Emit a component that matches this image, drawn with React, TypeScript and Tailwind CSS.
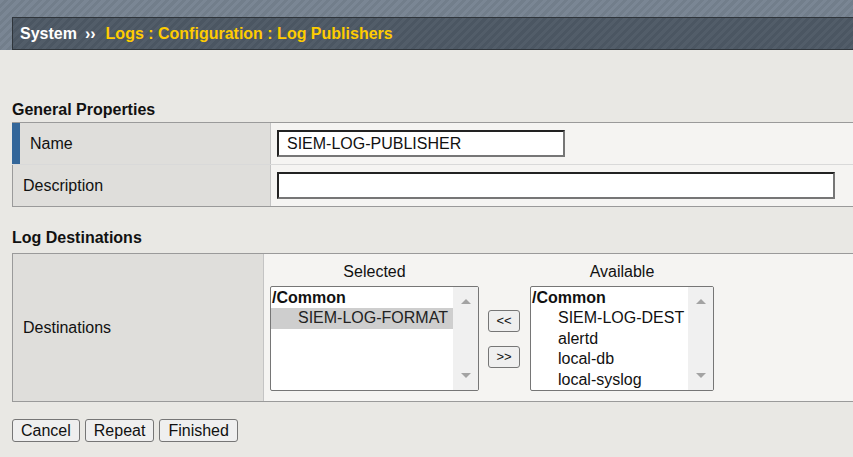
import React from "react";

type ListItem = { label: string; group?: boolean; selected?: boolean };

const selectedItems: ListItem[] = [
  { label: "/Common", group: true },
  { label: "SIEM-LOG-FORMAT", selected: true },
];

const availableItems: ListItem[] = [
  { label: "/Common", group: true },
  { label: "SIEM-LOG-DEST" },
  { label: "alertd" },
  { label: "local-db" },
  { label: "local-syslog" },
];

function ListBox({ items, className }: { items: ListItem[]; className: string }) {
  return (
    <div className={`flex h-[105px] overflow-hidden rounded-[2px] border border-[#767676] bg-white ${className}`}>
      <div className="flex-1 pt-[0.5px] text-[16px] leading-[20.5px] text-[#111]">
        {items.map((it) =>
          it.group ? (
            <div key={it.label} className="pl-[1px] font-bold">{it.label}</div>
          ) : (
            <div
              key={it.label}
              className={`whitespace-nowrap pl-[27px] ${it.selected ? "bg-[#cecece] text-[#222]" : ""}`}
            >
              {it.label}
            </div>
          )
        )}
      </div>
      {/* fake scrollbar gutter */}
      <div className="flex w-[25px] flex-col items-center justify-between bg-[#f0f0f0] py-[12px]">
        <div className="h-0 w-0 border-x-[5px] border-b-[5px] border-x-transparent border-b-[#a3a3a3]" />
        <div className="h-0 w-0 border-x-[5px] border-t-[5px] border-x-transparent border-t-[#a3a3a3]" />
      </div>
    </div>
  );
}

const btnCls =
  "h-[23px] rounded-[3px] border border-[#767676] bg-[#efefef] px-2 text-[16px] leading-[20px] text-[#111]";

const moveBtnCls =
  "flex h-[22px] w-[32px] items-center justify-center rounded-[3px] border border-[#767676] bg-[#efefef] text-[13px] text-[#111]";

export default function App() {
  return (
    <div className="min-h-screen bg-[#e9e8e4] font-['Liberation_Sans',Arial,sans-serif] text-[#111]">
      {/* top banner */}
      <div className="bg-[#76828f] bg-[repeating-linear-gradient(135deg,#7a8694_0px,#7a8694_3px,#727e8b_3px,#727e8b_6px)] pl-[12px] pt-[17px]">
        <div className="flex h-[33px] items-center border-y border-l border-[#2f353b] bg-[#4f5a66] bg-[repeating-linear-gradient(135deg,#525d69_0px,#525d69_3px,#4b5662_3px,#4b5662_6px)] pl-[7px] text-[16px] font-bold">
          <span className="text-white">System</span>
          <span className="ml-[8px] text-white">››</span>
          <span className="ml-[10px] text-[#ffcc00]">Logs : Configuration : Log Publishers</span>
        </div>
      </div>

      {/* General Properties */}
      <h2 className="mt-[51px] mb-[3px] pl-[12px] text-[16px] font-bold leading-[18px]">General Properties</h2>
      <div className="ml-[12px] border-y border-[#9a9a9a] text-[16px]">
        <div className="flex h-[42px] border-b border-[#d9d9d9]">
          <div className="flex w-[259px] items-center border-r border-[#c4c4c4] bg-[#dfdedb]">
            <div className="h-full w-[8px] bg-[#336699]" />
            <span className="pl-[10px]">Name</span>
          </div>
          <div className="flex flex-1 items-center bg-[#f5f4f2] pl-[6px]">
            <div className="flex h-[27px] w-[288px] items-center border-2 border-t-[#222] border-l-[#222] border-b-[#767676] border-r-[#767676] bg-white pl-[8px]">
              SIEM-LOG-PUBLISHER
            </div>
          </div>
        </div>
        <div className="flex h-[41px]">
          <div className="flex w-[259px] items-center border-x border-l-[#9a9a9a] border-r-[#c4c4c4] bg-[#dfdedb] pl-[10px]">
            Description
          </div>
          <div className="flex flex-1 items-center bg-[#f5f4f2] pl-[6px]">
            <div className="h-[27px] w-[558px] border-2 border-t-[#222] border-l-[#222] border-b-[#767676] border-r-[#767676] bg-white" />
          </div>
        </div>
      </div>

      {/* Log Destinations */}
      <h2 className="mt-[22px] mb-[6px] pl-[12px] text-[16px] font-bold leading-[18px]">Log Destinations</h2>
      <div className="ml-[12px] flex h-[149px] border-y border-l border-[#9a9a9a] text-[16px]">
        <div className="flex w-[251px] items-center border-r border-[#c4c4c4] bg-[#dfdedb] pl-[10px]">
          Destinations
        </div>
        <div className="flex flex-1 items-start bg-[#f5f4f2] pl-[6px] pt-[9px]">
          <div className="flex flex-col">
            <div className="mb-[5px] text-center leading-[18px]">Selected</div>
            <ListBox items={selectedItems} className="w-[209px]" />
          </div>
          <div className="ml-[9px] mr-[10px] mt-[47px] flex flex-col gap-[14px]">
            <button className={moveBtnCls}>&lt;&lt;</button>
            <button className={moveBtnCls}>&gt;&gt;</button>
          </div>
          <div className="flex flex-col">
            <div className="mb-[5px] text-center leading-[18px]">Available</div>
            <ListBox items={availableItems} className="w-[184px]" />
          </div>
        </div>
      </div>

      {/* actions */}
      <div className="mt-[17px] flex gap-[5px] pl-[12px]">
        <button className={btnCls}>Cancel</button>
        <button className={btnCls}>Repeat</button>
        <button className={btnCls}>Finished</button>
      </div>
    </div>
  );
}
